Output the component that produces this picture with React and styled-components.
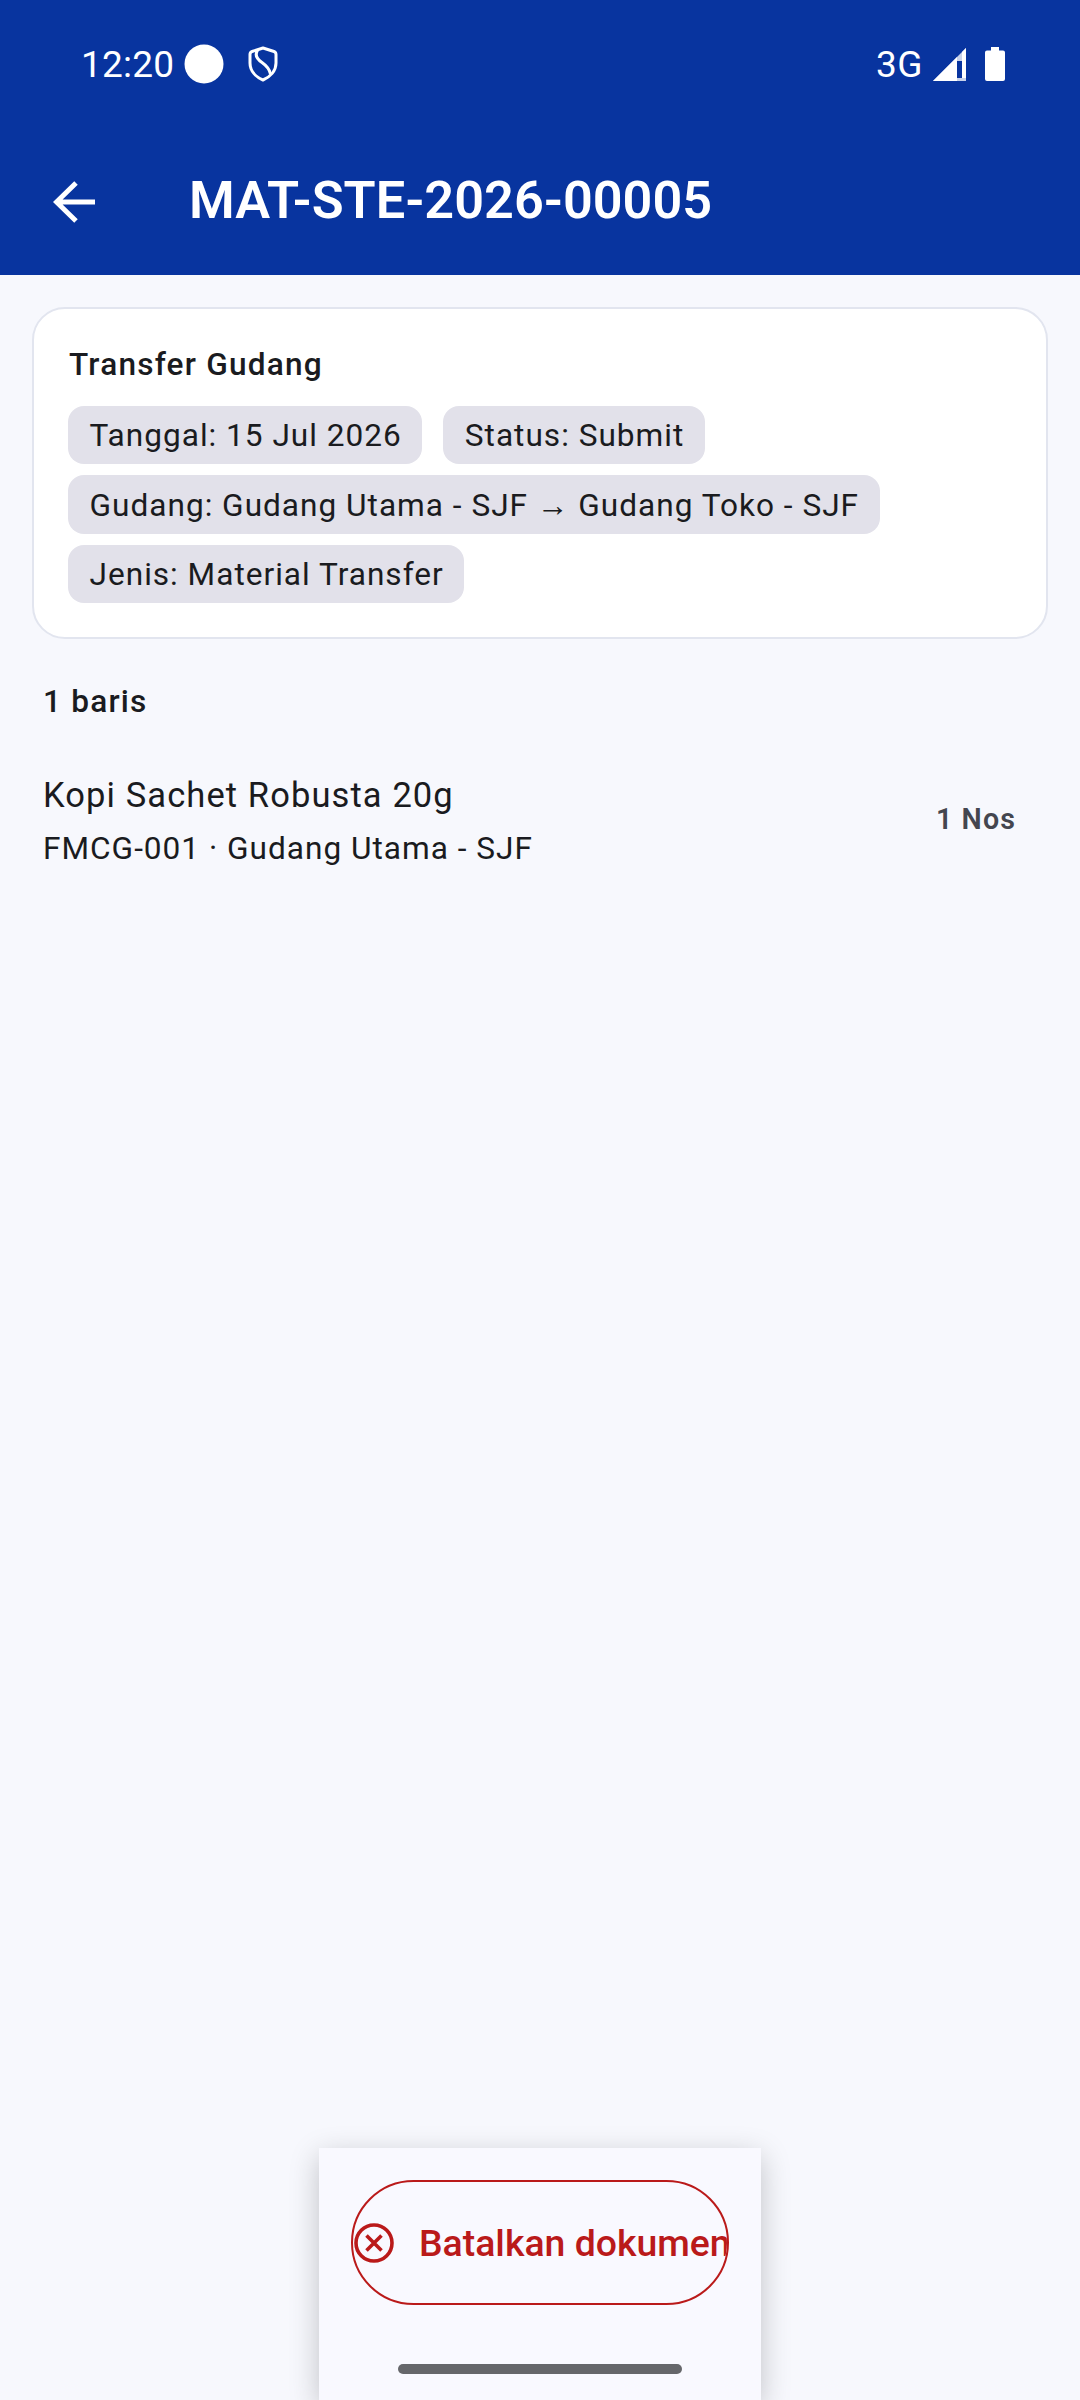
import React from "react";
import styled, { createGlobalStyle } from "styled-components";

const Global = createGlobalStyle`
  html, body { margin: 0; padding: 0; }
  body { font-family: Roboto, "Liberation Sans", sans-serif; background: #f7f8fd; }
  * { box-sizing: border-box; }
`;

const Page = styled.div`
  width: 1080px; height: 2400px; display: flex; flex-direction: column;
  background: #f7f8fd; overflow: hidden;
`;
const Header = styled.header`
  height: 275px; background: #08349f; color: #fff; display: flex; flex-direction: column; flex: none;
`;
const StatusBar = styled.div`
  height: 128px; display: flex; align-items: center; padding: 0 75px 0 81px;
`;
const Time = styled.span`
  font-size: 37px; letter-spacing: 0.2px; line-height: 1; margin-right: 10px;
`;
const Spacer = styled.div`flex: 1;`;
const Net = styled.span`font-size: 37px; letter-spacing: 0.5px; line-height: 1; margin-right: 10px;`;
const AppBar = styled.div`
  height: 147px; display: flex; align-items: center; padding: 0 0 0 53px;
`;
const BackButton = styled.div`
  width: 136px; flex: none; display: flex; align-items: center;
`;
const Title = styled.h1`
  margin: 0; font-size: 52.25px; font-weight: 600; line-height: 1; white-space: nowrap;
`;
const Card = styled.section`
  margin: 32px 32px 0; height: 332px; background: #fff; border: 2px solid #e2e5ef;
  border-radius: 33px; padding: 37px 34px 0;
`;
const CardTitle = styled.div`
  font-size: 31.6px; font-weight: 500; line-height: 38px; letter-spacing: 1.2px; color: #1a1b20;
  padding-left: 1px;
`;
const Chips = styled.div`
  display: flex; flex-wrap: wrap; gap: 11px 21px; margin-top: 22px;
`;
const Chip = styled.span`
  height: ${p => p.$tall ? 59 : 58}px; display: flex; align-items: center;
  padding: ${p => p.$tall ? 1 : 0}px 20.5px 0 21.5px;
  background: #e2e1ea; border-radius: 16px;
  font-size: 31.6px; letter-spacing: 1px; color: #1a1b20; white-space: nowrap;
`;
const Section = styled.div`
  margin: 44px 43px 0; font-size: 31.6px; font-weight: 500; line-height: 38px;
  letter-spacing: 1.2px; color: #1a1b20;
`;
const Row = styled.div`
  display: flex; align-items: center; justify-content: space-between;
  margin: 52px 64px 0 43px;
`;
const RowText = styled.div`display: flex; flex-direction: column;`;
const RowTitle = styled.div`
  font-size: 34.5px; line-height: 44px; letter-spacing: 1.1px; color: #1a1b20;
`;
const RowSub = styled.div`
  font-size: 31.6px; line-height: 40px; margin-top: 12px; letter-spacing: 1px; color: #1a1b20;
`;
const Qty = styled.div`
  font-size: 28.6px; font-weight: 600; letter-spacing: 1.1px; color: #44464f; margin-bottom: 5px;
`;
const BottomBar = styled.div`
  margin-top: auto; align-self: center; width: 442px; height: 252px; flex: none;
  background: #f9f9ff; box-shadow: 0 8px 28px rgba(0,0,0,0.22);
  display: flex; flex-direction: column; align-items: center; padding-top: 32px;
`;
const CancelButton = styled.div`
  width: 378px; height: 125px; flex: none; border: 2.5px solid #ba1a1a; border-radius: 63px;
  display: flex; align-items: center; color: #ba1a1a; overflow: hidden; background: transparent;
`;
const CancelLabel = styled.span`
  font-size: 37.4px; font-weight: 500; white-space: nowrap; margin-left: 24px;
`;
const Handle = styled.div`
  width: 284px; height: 10px; border-radius: 5px; background: #66676b; margin-top: 59px; flex: none;
`;
const Icon = styled.svg`display: block; flex: none; margin-left: ${p => p.$ml || 0}px;`;

export default function App() {
  return (
    <Page>
      <Global />
      <Header>
        <StatusBar>
          <Time>12:20</Time>
          <Icon width="40" height="40" viewBox="0 0 40 40"><circle cx="20" cy="20" r="19.5" fill="#fff" /></Icon>
          <Icon $ml={24} width="30" height="36" viewBox="0 0 30 36" fill="none" stroke="#fff" strokeWidth="3">
            <path d="M15 2 L26 5.5 Q28 6.2 28 8.5 V17 C28 25 22 31 15 34 C8 31 2 25 2 17 V8.5 Q2 6.2 4 5.5 Z" strokeLinejoin="round" />
            <path d="M9.5 4.5 C6.5 9 9 13 14 16.5 C19 20 21.5 23 22.5 28" />
          </Icon>
          <Spacer />
          <Net>3G</Net>
          <Icon width="33" height="33" viewBox="0 0 33 33">
            <path d="M33 0 V33 H0 Z" fill="#fff" fillOpacity="0.78" />
            <path d="M24 9 L0 33 H24 Z" fill="#fff" />
            <path d="M24 13 H29 V30 H24 Z" fill="#08349f" />
            <path d="M29 4 L33 0 V30 H29 Z" fill="#fff" />
          </Icon>
          <Icon $ml={19} width="20" height="34" viewBox="0 0 20 34">
            <path d="M6 0 H14 V3.5 H18 A2 2 0 0 1 20 5.5 V32 A2 2 0 0 1 18 34 H2 A2 2 0 0 1 0 32 V5.5 A2 2 0 0 1 2 3.5 H6 Z" fill="#fff" />
          </Icon>
        </StatusBar>
        <AppBar>
          <BackButton>
            <Icon width="42" height="42" viewBox="0 0 42 42" fill="none" stroke="#fff" strokeWidth="5">
              <path d="M42 21 H4 M23 2 L3.5 21 L23 40" />
            </Icon>
          </BackButton>
          <Title>MAT-STE-2026-00005</Title>
        </AppBar>
      </Header>
      <Card>
        <CardTitle>Transfer Gudang</CardTitle>
        <Chips>
          <Chip>Tanggal: 15 Jul 2026</Chip>
          <Chip>Status: Submit</Chip>
          <Chip $tall>Gudang: Gudang Utama - SJF → Gudang Toko - SJF</Chip>
          <Chip>Jenis: Material Transfer</Chip>
        </Chips>
      </Card>
      <Section>1 baris</Section>
      <Row>
        <RowText>
          <RowTitle>Kopi Sachet Robusta 20g</RowTitle>
          <RowSub>FMCG-001 · Gudang Utama - SJF</RowSub>
        </RowText>
        <Qty>1 Nos</Qty>
      </Row>
      <BottomBar>
        <CancelButton>
          <Icon width="42" height="42" viewBox="0 0 42 42" fill="none" stroke="#ba1a1a" strokeWidth="3.6">
            <circle cx="21" cy="21" r="18" />
            <path d="M13.5 13.5 L28.5 28.5 M28.5 13.5 L13.5 28.5" />
          </Icon>
          <CancelLabel>Batalkan dokumen</CancelLabel>
        </CancelButton>
        <Handle />
      </BottomBar>
    </Page>
  );
}
